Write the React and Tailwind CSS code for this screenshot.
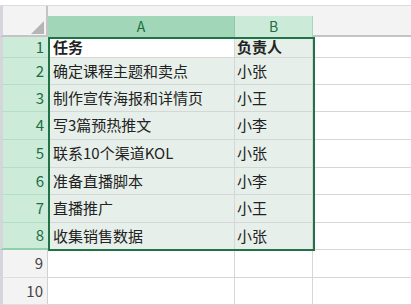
import React from 'react';

const rows = [
  { n: 1, a: '任务', b: '负责人', h: 'h-[21px]', head: true },
  { n: 2, a: '确定课程主题和卖点', b: '小张', h: 'h-[27px]' },
  { n: 3, a: '制作宣传海报和详情页', b: '小王', h: 'h-[27px]' },
  { n: 4, a: '写3篇预热推文', b: '小李', h: 'h-[28px]' },
  { n: 5, a: '联系10个渠道KOL', b: '小张', h: 'h-[28px]' },
  { n: 6, a: '准备直播脚本', b: '小李', h: 'h-[27px]' },
  { n: 7, a: '直播推广', b: '小王', h: 'h-[28px]' },
  { n: 8, a: '收集销售数据', b: '小张', h: 'h-[27px]' },
  { n: 9, a: '', b: '', h: 'h-[28px]', empty: true },
  { n: 10, a: '', b: '', h: 'h-[27px]', empty: true },
];

export default function App() {
  return (
    <div className="w-[411px] h-[305px] overflow-hidden bg-white font-['Noto_Sans_CJK_SC','Noto_Sans',sans-serif] text-[#222]">
      {/* top strip */}
      <div className="h-[6px] bg-white border-b border-[#dcdcdc]" />

      <div className="relative">
        {/* column headers */}
        <div className="flex h-[31px] bg-[#f3f3f3]">
          <div className="relative w-[48px] shrink-0 border-l-[3px] border-l-[#d4d6dc] border-r-2 border-r-[#c4c4c4] border-b-2 border-b-[#c4c4c4]">
            <svg className="absolute right-[2px] bottom-[1px]" width="13" height="13" viewBox="0 0 13 13">
              <polygon points="0,13 13,13 13,0" fill="#b5b5b5" />
            </svg>
          </div>
          <div className="w-[187px] shrink-0 flex flex-col">
            <div className="h-[12px]" />
            <div className="flex-1 bg-[#a1d7b8] border-r border-[#8cccab] flex items-center justify-center text-[14px] text-[#1e6e42]">A</div>
          </div>
          <div className="w-[78px] shrink-0 flex flex-col">
            <div className="h-[12px]" />
            <div className="flex-1 bg-[#cbead8] border-r border-[#a6d9bc] flex items-center justify-center text-[14px] text-[#1e6e42]">B</div>
          </div>
          <div className="flex-1 flex flex-col">
            <div className="flex-1 border-b-2 border-[#c4c4c4]" />
          </div>
        </div>

        {/* rows */}
        {rows.map((r) => (
          <div key={r.n} className={`flex ${r.h}`}>
            <div
              className={`w-[48px] shrink-0 border-l-[3px] border-l-[#d4d6dc] flex items-center justify-end pr-[4px] text-[15px] ${
                r.empty
                  ? 'bg-[#f3f3f3] text-[#444] border-b border-b-[#dedede] border-r border-r-[#d0d0d0]'
                  : r.n === 8
                  ? 'bg-[#cdebd9] text-[#1e6e42] border-b-2 border-b-[#8fd0a8]'
                  : 'bg-[#cdebd9] text-[#1e6e42] border-b border-b-[#b5dfc5]'
              }`}
            >
              {r.n}
            </div>
            <div
              className={`w-[187px] shrink-0 border-b border-r border-[#d6d6d6] flex items-center pl-[5px] text-[15px] whitespace-nowrap ${
                r.empty ? 'bg-white' : r.head ? 'bg-white font-bold' : 'bg-[#e6efe9]'
              }`}
            >
              {r.a}
            </div>
            <div
              className={`w-[78px] shrink-0 border-b border-r border-[#d6d6d6] flex items-center pl-[2px] text-[15px] whitespace-nowrap ${
                r.empty ? 'bg-white' : r.head ? 'bg-[#e6efe9] font-bold' : 'bg-[#e6efe9]'
              }`}
            >
              {r.b}
            </div>
            <div className="flex-1 border-b border-[#d6d6d6] bg-white" />
          </div>
        ))}

        {/* selection outline */}
        <div className="absolute left-[48px] top-[31px] w-[267px] h-[214px] border-2 border-[#1f7346] pointer-events-none" />
      </div>
    </div>
  );
}
